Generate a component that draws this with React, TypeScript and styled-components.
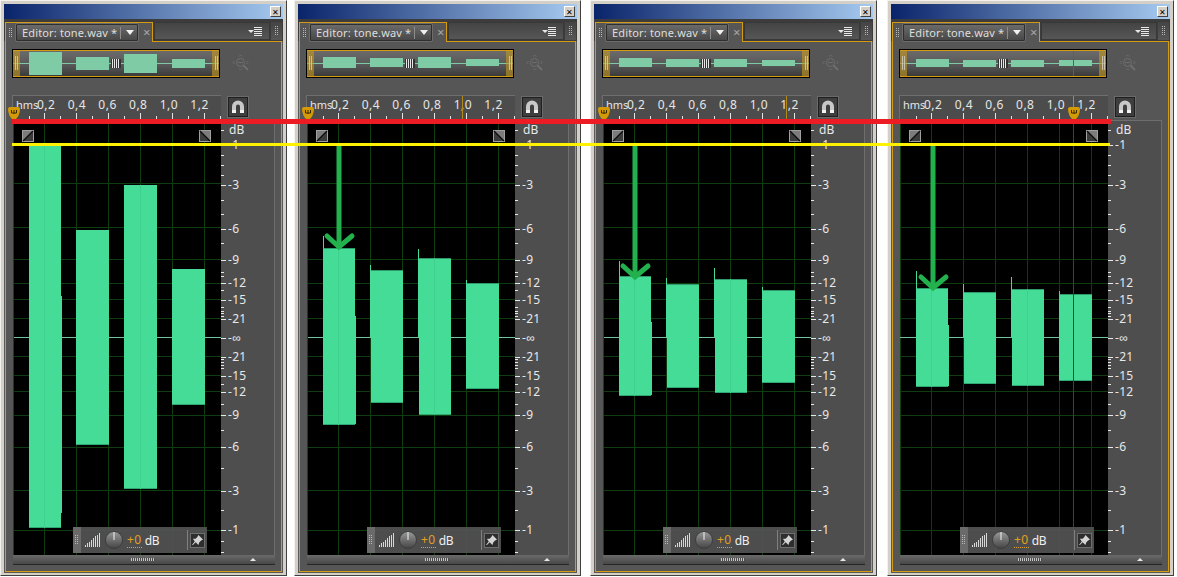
import React from 'react'
import styled, {createGlobalStyle} from 'styled-components'

type Wave = {x: number, top: number, bottom: number, spike?: number, ext?: [number, number], shift?: number}
type Bar = {x: number, top: number, bottom: number}
type PanelData = {
    gap: number
    waves: Wave[]
    overview: Bar[]
    arrow?: {x: number, tip: number}
    playhead: number
    cursor?: number
    showRed?: boolean
}

const WAVE_TOP = 120
const WAVE_LEFT = 13
const GRID_X = [44, 76, 108, 140, 172, 204]
const GRID_Y = [144, 183, 227, 259, 283, 299, 318, 356, 375, 391, 415, 447, 490, 530]

const DB_LABELS: [string, number][] = [
    ['-1', 145], ['-3', 185], ['-6', 229], ['-9', 260], ['-12', 283], ['-15', 300], ['-21', 319], ['-∞', 338],
    ['-21', 357], ['-15', 376], ['-12', 392], ['-9', 415], ['-6', 447], ['-3', 491], ['-1', 530],
]
const DB_MINOR = [130, 155, 165, 175, 200, 214, 243, 272, 276, 290, 307, 311, 313, 316, 359, 362, 365, 368, 384, 404, 430, 468, 510, 541, 552]

const panels: PanelData[] = [
    {
        gap: 7,
        waves: [
            {x: 29, top: 146, bottom: 528, ext: [296, 513]},
            {x: 76, top: 230, bottom: 445},
            {x: 124, top: 185, bottom: 489},
            {x: 172, top: 269, bottom: 405},
        ],
        overview: [
            {x: 29, top: 52, bottom: 75},
            {x: 76, top: 57, bottom: 70},
            {x: 124, top: 54, bottom: 73},
            {x: 172, top: 59, bottom: 68},
        ],
        playhead: 13,
    },
    {
        gap: 9,
        waves: [
            {x: 29, top: 248, bottom: 425, spike: 236, ext: [316, 424]},
            {x: 76, top: 270, bottom: 403, spike: 265, shift: 1},
            {x: 124, top: 258, bottom: 415, spike: 249, shift: 1},
            {x: 172, top: 283, bottom: 389, spike: 280},
        ],
        overview: [
            {x: 29, top: 57, bottom: 68},
            {x: 76, top: 58, bottom: 67},
            {x: 124, top: 57, bottom: 68},
            {x: 172, top: 59, bottom: 66},
        ],
        arrow: {x: 44, tip: 249},
        playhead: 13,
        cursor: 168,
    },
    {
        gap: 10,
        waves: [
            {x: 29, top: 276, bottom: 396, spike: 261, ext: [322, 395]},
            {x: 76, top: 284, bottom: 388, spike: 278, shift: 1},
            {x: 124, top: 279, bottom: 393, spike: 268, shift: 1},
            {x: 172, top: 290, bottom: 383, spike: 287},
        ],
        overview: [
            {x: 29, top: 58, bottom: 67},
            {x: 76, top: 59, bottom: 67},
            {x: 124, top: 59, bottom: 67},
            {x: 172, top: 60, bottom: 66},
        ],
        arrow: {x: 44, tip: 279},
        playhead: 13,
        cursor: 196,
    },
    {
        gap: 0,
        waves: [
            {x: 29, top: 288, bottom: 387, spike: 271, ext: [325, 386]},
            {x: 76, top: 292, bottom: 384, spike: 284, shift: 1},
            {x: 124, top: 289, bottom: 386, spike: 277, shift: 1},
            {x: 172, top: 294, bottom: 381, spike: 291},
        ],
        overview: [
            {x: 29, top: 59, bottom: 67},
            {x: 76, top: 60, bottom: 67},
            {x: 124, top: 60, bottom: 67},
            {x: 172, top: 60, bottom: 66},
        ],
        arrow: {x: 45, tip: 290},
        playhead: 186,
        cursor: 186,
        showRed: true,
    },
]

const RULER_LABELS = ['0,2', '0,4', '0,6', '0,8', '1,0', '1,2']

const Grip = ({height}: {height: number}) => (
    <svg width={4} height={height}>
        {Array.from({length: Math.floor(height / 2)}).map((_, i) => (
            <g key={i} fill="#b8b8b8">
                <rect x={0} y={i * 2} width={1} height={1}/>
                <rect x={2} y={i * 2} width={1} height={1}/>
            </g>
        ))}
    </svg>
)

const Overview = ({bars, marker}: {bars: Bar[], marker?: number}) => (
    <OverviewBox>
        <svg width={206} height={27}>
            <defs>
                <linearGradient id="ovbg" x1="0" y1="0" x2="0" y2="1">
                    <stop offset="0" stopColor="#6c6c6c"/>
                    <stop offset="0.55" stopColor="#585858"/>
                    <stop offset="1" stopColor="#383838"/>
                </linearGradient>
            </defs>
            <rect width={206} height={27} fill="url(#ovbg)"/>
            <rect x={0} y={13} width={206} height={1} fill="#7ec9a6"/>
            {bars.map((b, i) => (
                <rect key={i} x={b.x - 13} y={b.top - 50} width={33} height={b.bottom - b.top} fill="#7ecba6"/>
            ))}
            <rect x={98} y={9} width={10} height={9} fill="#333"/>
            {[99, 101, 103, 105].map(x => (
                <rect key={x} x={x} y={9} width={1} height={9} fill="#e6e6e6"/>
            ))}
            {marker && <rect x={marker - 13} y={0} width={1} height={27} fill="#a04040"/>}
            <rect x={0} y={0} width={7} height={27} fill="#c49a20" fillOpacity={0.6}/>
            <rect x={199} y={0} width={7} height={27} fill="#c49a20" fillOpacity={0.6}/>
            <rect x={0} y={0} width={206} height={1} fill="#d49a12"/>
            <rect x={0} y={26} width={206} height={1} fill="#d49a12"/>
            <path d="M2.5 6V20M4.5 6V20M202.5 6V20M204.5 6V20" stroke="#c8c0a8" strokeWidth={1}/>
        </svg>
    </OverviewBox>
)

const ZoomGlyph = () => (
    <svg width={19} height={19} viewBox="0 0 19 19" fill="none" stroke="#6e6e6e">
        <circle cx={8.5} cy={8.5} r={4}/>
        <path d="M6 8.5H11" />
        <path d="M11.5 11.5L16 16" strokeWidth={2}/>
        <path d="M7 2.5L8.5 1L10 2.5M2.5 7L1 8.5L2.5 10M14.5 7L16 8.5L14.5 10M7 14.5L8.5 16L10 14.5"/>
    </svg>
)

const MagnetGlyph = () => (
    <svg width={14} height={14} viewBox="0 0 14 14">
        <path d="M1 13V6.5a6 6 0 0 1 12 0V13H9V6.5a2 2 0 0 0-4 0V13Z" fill="#c8c8c8"/>
        <path d="M1 13V10H5V13ZM9 13V10H13V13Z" fill="#f4f4f4"/>
    </svg>
)

const Marker = () => (
    <svg width={12} height={14} viewBox="0 0 12 14">
        <path d="M0 2Q0 0 2 0H10Q12 0 12 2Q12 9 6 14Q0 9 0 2Z" fill="#d49a06"/>
        <path d="M3.5 3V6M6 3V7M8.5 3V6M3.5 6H8.5" stroke="#3a2c00" strokeWidth={1} fill="none"/>
    </svg>
)

const RulerTicks = () => (
    <svg width={208} height={7}>
        {Array.from({length: 13}).map((_, i) => {
            const x = 16 + i * 16 - (i > 0 ? 1 : 0)
            const major = i % 2 === 1
            return <rect key={i} x={x} y={major ? 0 : 3} width={1} height={major ? 7 : 4} fill="#e4e4e4"/>
        })}
    </svg>
)

const WaveShape = ({w}: {w: Wave}) => {
    const shift = w.shift || 0
    const left = w.x - WAVE_LEFT
    const up = (v: number) => v - WAVE_TOP
    const width = w.x === 29 ? 32 : 33
    return (
        <g fill="#44dc97">
            <rect x={left} y={up(w.top)} width={width} height={337 - w.top}/>
            <rect x={left + shift} y={up(337)} width={width - shift} height={w.bottom - 337}/>
            {w.spike && <rect x={left} y={up(w.top)} width={width} height={1} fill="#2f9b6c"/>}
            <rect x={left + shift} y={up(w.bottom) - 1} width={width - shift} height={1} fill="#30a873"/>
            {w.spike && <rect x={left} y={up(w.spike)} width={1} height={w.top - w.spike + 1}/>}
            {w.ext && <rect x={left + width} y={up(w.ext[0])} width={1} height={w.ext[1] - w.ext[0]}/>}
        </g>
    )
}

const WaveCanvas = ({data}: {data: PanelData}) => (
    <svg width={208} height={435} style={{display: 'block'}}>
        <rect width={208} height={435} fill="#000"/>
        {[WAVE_LEFT, ...GRID_X].map(x => (
            <rect key={x} x={x - WAVE_LEFT} y={0} width={1} height={435} fill="#0f3d0f"/>
        ))}
        {GRID_Y.map(y => (
            <rect key={y} x={0} y={y - WAVE_TOP} width={208} height={1} fill="#0f3d0f"/>
        ))}
        <rect x={0} y={337 - WAVE_TOP} width={208} height={1} fill="#6fc49c"/>
        {data.waves.map((w, i) => <WaveShape key={i} w={w}/>)}
        {/* grid shows faintly through the blocks */}
        <rect x={44 - WAVE_LEFT} y={data.waves[0].top - WAVE_TOP} width={1} height={data.waves[0].bottom - data.waves[0].top} fill="#3fd08e"/>
        <rect x={140 - WAVE_LEFT} y={data.waves[2].top - WAVE_TOP} width={1} height={data.waves[2].bottom - data.waves[2].top} fill="#3fd08e"/>
        {data.showRed
            ? <rect x={data.playhead - WAVE_LEFT} y={0} width={1} height={435} fill="#b01010"/>
            : <rect x={0} y={0} width={1} height={435} fill="#a00000"/>}
        {data.arrow && (
            <g stroke="#22b14c" strokeWidth={5} fill="none">
                <path d={`M${data.arrow.x - WAVE_LEFT + 1} 24V${data.arrow.tip - WAVE_TOP - 2}`}/>
                <path
                    strokeLinecap="round"
                    d={`M${data.arrow.x - WAVE_LEFT - 11} ${data.arrow.tip - WAVE_TOP - 13}L${data.arrow.x - WAVE_LEFT + 1} ${data.arrow.tip - WAVE_TOP - 2}L${data.arrow.x - WAVE_LEFT + 14} ${data.arrow.tip - WAVE_TOP - 13}`}
                />
            </g>
        )}
    </svg>
)

const FadeGlyph = ({flip}: {flip?: boolean}) => (
    <svg width={12} height={12} viewBox="0 0 12 12">
        <rect width={12} height={12} fill="#a0a0a0"/>
        <rect x={1} y={1} width={10} height={10} fill="#3c3c3c"/>
        <path d={flip ? 'M1 1H11V11Z' : 'M1 1H11L1 11Z'} fill="#7c7c7c"/>
        <path d={flip ? 'M1 1L11 11' : 'M1 11L11 1'} stroke="#0c0c0c" strokeWidth={1.2}/>
    </svg>
)

const SignalGlyph = () => (
    <svg width={16} height={14}>
        {Array.from({length: 8}).map((_, i) => {
            const h = 2 + Math.round(i * 1.7)
            return <rect key={i} x={i * 2} y={14 - h} width={1} height={h} fill="#d8d8d8"/>
        })}
    </svg>
)

const KnobGlyph = () => (
    <KnobWrap>
        <svg width={18} height={18} viewBox="0 0 18 18">
            <defs>
                <linearGradient id="knob" x1="0" y1="0" x2="0" y2="1">
                    <stop offset="0" stopColor="#9a9a9a"/>
                    <stop offset="1" stopColor="#444"/>
                </linearGradient>
            </defs>
            <circle cx={9} cy={9} r={8.5} fill="url(#knob)" stroke="#3c3c3c"/>
            <rect x={8.5} y={1} width={1} height={8} fill="#f2f2f2"/>
        </svg>
    </KnobWrap>
)

const PinGlyph = () => (
    <svg width={11} height={11} viewBox="0 0 12 12">
        <path d="M7 0L12 5L10 6L8 8L7 11L4 8L1 11L0 11L3 7L1 4L4 4L6 2Z" fill="#d4d4d4"/>
    </svg>
)

const MenuGlyph = () => (
    <svg width={15} height={9}>
        <path d="M0 3H6L3 6Z" fill="#e8e8e8"/>
        <path d="M6 .5H14M6 2.5H14M6 4.5H14M6 6.5H14M6 8.5H14" stroke="#e8e8e8" strokeWidth={1}/>
    </svg>
)

const Panel = ({data}: {data: PanelData}) => (
    <Window $gap={data.gap}>
        <TitleBar>
            <CloseButton>✕</CloseButton>
        </TitleBar>
        <Dock>
            <TabStrip>
                <ActiveTab>
                    <Grip height={10}/>
                    <TabPill>
                        <TabLabel>Editor: tone.wav *</TabLabel>
                        <TabDivider/>
                        <TabArrow/>
                    </TabPill>
                    <TabClose>×</TabClose>
                </ActiveTab>
                <EmptyTabs>
                    <MenuGlyph/>
                </EmptyTabs>
                <GripCell>
                    <Grip height={10}/>
                </GripCell>
            </TabStrip>
            <Body>
                <OverviewRow>
                    <Overview bars={data.overview} marker={data.showRed ? data.playhead : undefined}/>
                    <ZoomGlyph/>
                </OverviewRow>
                <RulerRow>
                    <Ruler>
                        <RulerLabels>
                            <HmsLabel>hms</HmsLabel>
                            {RULER_LABELS.map(l => <RulerLabel key={l}>{l}</RulerLabel>)}
                        </RulerLabels>
                        <RulerTicks/>
                        {data.cursor && <RulerCursor $x={data.cursor - 13}/>}
                        <PlayMarker $x={data.playhead - 13}>
                            <Marker/>
                        </PlayMarker>
                    </Ruler>
                    <MagnetButton>
                        <MagnetGlyph/>
                    </MagnetButton>
                </RulerRow>
                <MainRow>
                    <WaveArea>
                        <WaveCanvas data={data}/>
                        <FadeHandle $x={9}><FadeGlyph/></FadeHandle>
                        <FadeHandle $x={186}><FadeGlyph flip/></FadeHandle>
                        <Hud>
                            <HudGrip>
                                <Grip height={10}/>
                            </HudGrip>
                            <SignalGlyph/>
                            <KnobGlyph/>
                            <GainValue>+0</GainValue>
                            <GainUnit>dB</GainUnit>
                            <HudSeparator/>
                            <PinButton>
                                <PinGlyph/>
                            </PinButton>
                        </Hud>
                    </WaveArea>
                    <DbScale>
                        <DbUnit>dB</DbUnit>
                        <svg width={5} height={435}>
                            {DB_LABELS.map(([l, y], i) => (
                                <rect key={l + i} x={0} y={y - WAVE_TOP} width={5} height={1} fill="#e8e8e8"/>
                            ))}
                            {DB_MINOR.map(y => (
                                <rect key={y} x={0} y={y - WAVE_TOP} width={3} height={1} fill="#e8e8e8"/>
                            ))}
                        </svg>
                        {DB_LABELS.map(([l, y], i) => (
                            <DbLabel key={l + i} $y={y - WAVE_TOP}>{l}</DbLabel>
                        ))}
                    </DbScale>
                </MainRow>
                <ScrollBar>
                    <ScrollGrip/>
                    <ScrollArrow/>
                </ScrollBar>
            </Body>
        </Dock>
    </Window>
)

export default function App() {
    return (
        <Page>
            <GlobalStyle/>
            {panels.map((p, i) => <Panel key={i} data={p}/>)}
            <RedGuide/>
            <YellowGuide/>
        </Page>
    )
}

const GlobalStyle = createGlobalStyle`
    html, body {
        margin: 0;
        padding: 0;
        background: #fff;
    }
    * {
        box-sizing: border-box;
    }
`

const Page = styled.div`
    position: relative;
    display: flex;
    width: 1177px;
    height: 577px;
    overflow: hidden;
    font-family: 'Noto Sans', 'Liberation Sans', sans-serif;
    font-size: 12px;
`

const RedGuide = styled.div`
    position: absolute;
    left: 12px;
    top: 119px;
    width: 1099px;
    height: 5px;
    background: #ed1c24;
`

const YellowGuide = styled.div`
    position: absolute;
    left: 12px;
    top: 143px;
    width: 1098px;
    height: 3px;
    background: #fff200;
`

const Window = styled.div<{$gap: number}>`
    flex: none;
    width: 287px;
    height: 576px;
    margin-right: ${p => p.$gap}px;
    padding: 3px;
    background: #d4d0c8;
    border: 1px solid;
    border-color: #f4f2ee #404040 #404040 #f4f2ee;
    display: flex;
    flex-direction: column;
`

const TitleBar = styled.div`
    height: 15px;
    flex: none;
    display: flex;
    justify-content: flex-end;
    align-items: center;
    padding-right: 2px;
    background: linear-gradient(90deg, #0a246a, #a6caf0);
`

const CloseButton = styled.div`
    width: 11px;
    height: 11px;
    display: flex;
    align-items: center;
    justify-content: center;
    font-size: 8px;
    line-height: 1;
    color: #000;
    background: #d4d0c8;
    border: 1px solid;
    border-color: #fff #404040 #404040 #fff;
`

const Dock = styled.div`
    flex: 1;
    display: flex;
    flex-direction: column;
    padding: 0 1px 1px;
    background: #5a5a5a;
`

const TabStrip = styled.div`
    flex: none;
    height: 22px;
    display: flex;
    align-items: flex-start;
    background: #3c3c3c;
    margin: 0 -1px;
    padding: 3px 1px 0;
`

const ActiveTab = styled.div`
    position: relative;
    z-index: 1;
    flex: none;
    width: 148px;
    height: 20px;
    display: flex;
    align-items: center;
    gap: 3px;
    padding: 0 0 0 3px;
    background: #565656;
    border: 1px solid #d49a12;
    border-bottom: 0;
`

const TabPill = styled.div`
    width: 122px;
    height: 17px;
    display: flex;
    align-items: center;
    padding-left: 5px;
    background: linear-gradient(#6a6a6a, #484848);
    border: 1px solid #2e2e2e;
    box-shadow: 0 0 0 1px #6c6c6c;
    border-radius: 1px;
`

const TabLabel = styled.span`
    width: 98px;
    color: #dedede;
    font-size: 11px;
    letter-spacing: 0.15px;
    line-height: 14px;
    white-space: nowrap;
`

const TabDivider = styled.span`
    width: 1px;
    height: 12px;
    background: #8c8c8c;
`

const TabArrow = styled.span`
    margin-left: 5px;
    width: 0;
    height: 0;
    border-left: 4px solid transparent;
    border-right: 4px solid transparent;
    border-top: 5px solid #f0f0f0;
`

const TabClose = styled.span`
    margin-left: 2px;
    color: #a8a8a8;
    font-size: 13px;
    line-height: 1;
`

const EmptyTabs = styled.div`
    flex: 1;
    height: 18px;
    display: flex;
    align-items: center;
    justify-content: flex-end;
    padding-right: 6px;
    margin-left: 1px;
    background: linear-gradient(#444, #565656);
    border: 1px solid #383838;
`

const GripCell = styled.div`
    flex: none;
    width: 11px;
    height: 18px;
    margin-left: 1px;
    display: flex;
    align-items: center;
    justify-content: center;
    background: linear-gradient(#444, #565656);
`

const Body = styled.div`
    position: relative;
    flex: 1;
    padding: 7px 6px 6px;
    display: flex;
    flex-direction: column;
    background: #565656;
    border: 1px solid #d49a12;
`

const OverviewRow = styled.div`
    display: flex;
    align-items: center;
    gap: 12px;
    height: 29px;
    flex: none;
`

const OverviewBox = styled.div`
    width: 208px;
    height: 29px;
    background: #000;
    border: 1px solid #000;
    & > svg {
        display: block;
    }
`

const RulerRow = styled.div`
    display: flex;
    gap: 7px;
    height: 25px;
    flex: none;
    margin-top: 17px;
`

const Ruler = styled.div`
    position: relative;
    width: 209px;
    height: 25px;
    background: #4c4c4c;
    border-top: 1px solid #6e6e6e;
    border-left: 1px solid #6e6e6e;
    display: flex;
    flex-direction: column;
    & > svg {
        display: block;
    }
`

const RulerLabels = styled.div`
    display: flex;
    height: 17px;
    padding: 1px 0 0 3px;
    color: #e6e6e6;
    font-size: 12px;
    line-height: 15px;
    letter-spacing: 0.5px;
`

const HmsLabel = styled.span`
    width: 21px;
    font-size: 11px;
    letter-spacing: 0;
    white-space: nowrap;
`

const RulerLabel = styled.span`
    width: 32px;
`

const RulerCursor = styled.div<{$x: number}>`
    position: absolute;
    left: ${p => p.$x}px;
    top: 0;
    bottom: 0;
    width: 1px;
    background: #b08a18;
`

const PlayMarker = styled.div<{$x: number}>`
    position: absolute;
    left: ${p => p.$x - 5}px;
    top: 11px;
    width: 12px;
    height: 14px;
    & > svg {
        display: block;
    }
`

const MagnetButton = styled.div`
    width: 20px;
    height: 20px;
    margin-top: 2px;
    display: flex;
    align-items: center;
    justify-content: center;
    background: #3e3e3e;
    border: 1px solid #1f1f1f;
    box-shadow: 0 0 0 1px #6a6a6a;
`

const MainRow = styled.div`
    display: flex;
    height: 435px;
    flex: none;
    margin-left: 1px;
`

const WaveArea = styled.div`
    position: relative;
    width: 208px;
    flex: none;
`

const FadeHandle = styled.div<{$x: number}>`
    position: absolute;
    left: ${p => p.$x}px;
    top: 10px;
    width: 12px;
    height: 12px;
    & > svg {
        display: block;
    }
`

const Hud = styled.div`
    position: absolute;
    left: 60px;
    bottom: 2px;
    width: 134px;
    height: 26px;
    display: flex;
    align-items: center;
    background: rgba(84, 84, 84, 0.92);
    color: #f0f0f0;
    font-size: 12px;
`

const HudGrip = styled.div`
    width: 8px;
    height: 100%;
    display: flex;
    align-items: center;
    justify-content: center;
    margin-right: 4px;
    background: #6a6a6a;
`

const KnobWrap = styled.span`
    display: flex;
    margin-left: 4px;
`

const GainValue = styled.span`
    margin-left: 4px;
    color: #e0a020;
    border-bottom: 1px dotted #e0a020;
    letter-spacing: 0.5px;
    line-height: 14px;
`

const GainUnit = styled.span`
    margin-left: 3px;
    letter-spacing: -0.3px;
`

const HudSeparator = styled.span`
    width: 1px;
    height: 20px;
    margin-left: auto;
    background: #808080;
`

const PinButton = styled.div`
    width: 13px;
    height: 13px;
    margin: 0 3px 0 3px;
    display: flex;
    align-items: center;
    justify-content: center;
    background: #2e2e2e;
    box-shadow: 0 0 0 1px #6e6e6e;
`

const DbScale = styled.div`
    position: relative;
    flex: none;
    width: 54px;
    height: 435px;
    background: #4e4e4e;
    box-shadow: inset 0 1px #6e6e6e, inset -1px 0 #6e6e6e;
    color: #e8e8e8;
    font-size: 12px;
    & > svg {
        display: block;
    }
`

const DbUnit = styled.span`
    position: absolute;
    left: 8px;
    top: 3px;
    line-height: 14px;
`

const DbLabel = styled.span<{$y: number}>`
    position: absolute;
    left: 7px;
    top: ${p => p.$y - 8}px;
    line-height: 15px;
    letter-spacing: 0.3px;
`

const ScrollBar = styled.div`
    position: relative;
    height: 10px;
    flex: none;
    margin-left: 1px;
    display: flex;
    align-items: center;
    justify-content: center;
    background: linear-gradient(#6a6a6a, #484848);
    border-bottom: 1px solid #262626;
`

const ScrollGrip = styled.span`
    width: 24px;
    height: 3px;
    background: repeating-linear-gradient(90deg, #c4c4c4 0 1px, #4a4a4a 1px 2px);
    margin-right: 2px;
`

const ScrollArrow = styled.span`
    position: absolute;
    right: 19px;
    top: 3px;
    width: 0;
    height: 0;
    border-left: 3px solid transparent;
    border-right: 3px solid transparent;
    border-bottom: 3px solid #e8e8e8;
`
